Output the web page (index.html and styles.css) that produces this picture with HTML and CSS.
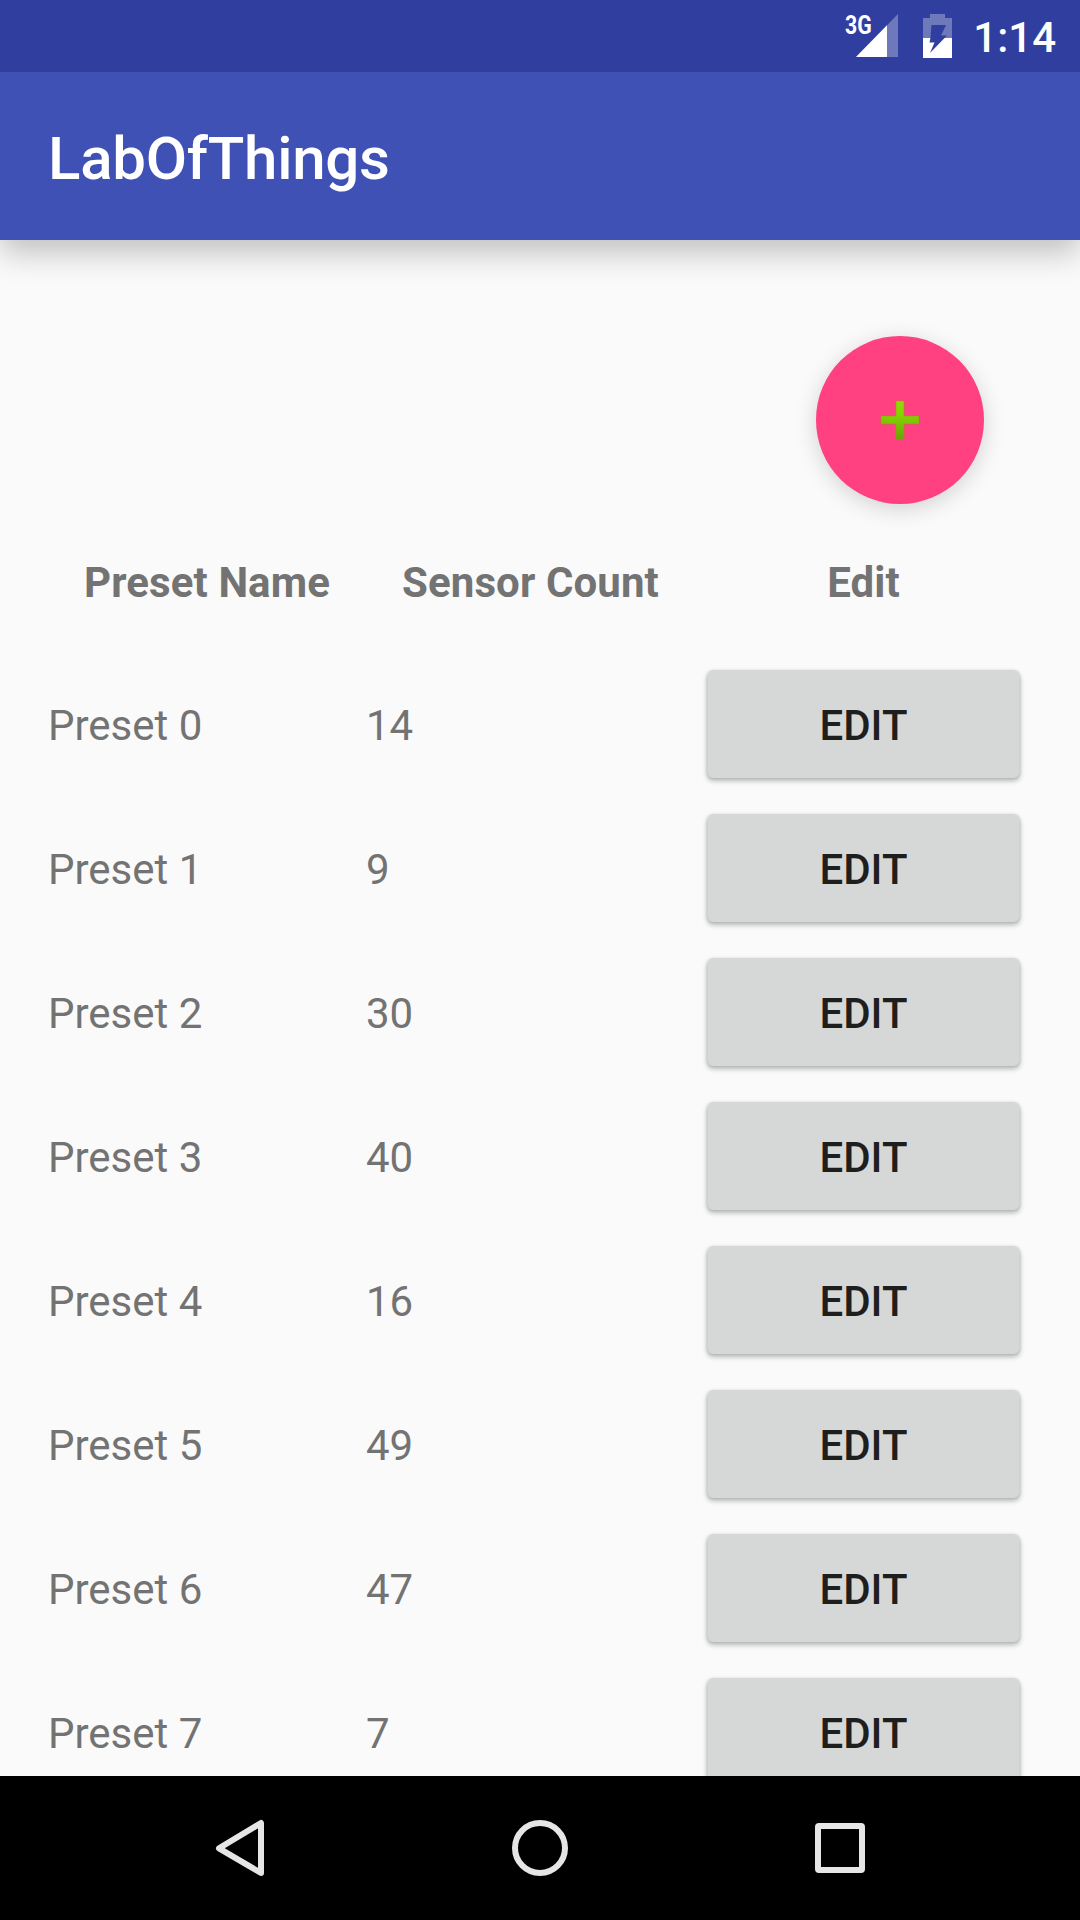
FILE: index.html
```html
<!DOCTYPE html>
<html lang="en">
<head>
<meta charset="utf-8">
<title>LabOfThings</title>
<link rel="stylesheet" href="styles.css">
</head>
<body>
<div class="screen">
  <div class="status-bar">
    <div class="network">
      <svg class="signal" width="42" height="43" viewBox="0 0 42 43">
        <path d="M42 0V43H0Z" fill="#fff" fill-opacity=".3"/>
        <path d="M31 11.300V43H0Z" fill="#fff"/>
      </svg>
      <span class="network-type">3G</span>
    </div>
    <svg class="battery" width="29" height="44" viewBox="0 0 29 44">
      <path d="M0 4H7V0H22V4H29V24H21.600L24 21.500H18L23 11H8.500L7.400 24H0Z" fill="#fff" fill-opacity=".3"/>
      <path d="M0 24H7.400L6.500 28.500H11.500L7 39L21.600 24H29V44H0Z" fill="#fff"/>
    </svg>
    <span class="clock">1:14</span>
  </div>
  <header class="app-bar"><h1 class="title">LabOfThings</h1></header>
  <main class="content">
    <div class="actions">
      <button class="fab" aria-label="Add preset">
        <svg width="40" height="40" viewBox="0 0 40 40">
          <defs>
            <linearGradient id="plus-fill" x1="0" y1="0" x2="0" y2="1">
              <stop offset="0" stop-color="#92de00"/>
              <stop offset=".4" stop-color="#86d000"/>
              <stop offset="1" stop-color="#68a400"/>
            </linearGradient>
          </defs>
          <path d="M16 1H24V16H39V24H24V39H16V24H1V16H16Z" fill="url(#plus-fill)" stroke="#8f9a20" stroke-opacity=".6" stroke-width="1" stroke-linejoin="round"/>
        </svg>
      </button>
    </div>
    <div class="table">
      <div class="row head"><span>Preset Name</span><span>Sensor Count</span><span>Edit</span></div>
      <div class="row"><span>Preset 0</span><span>14</span><button class="edit">EDIT</button></div>
      <div class="row"><span>Preset 1</span><span>9</span><button class="edit">EDIT</button></div>
      <div class="row"><span>Preset 2</span><span>30</span><button class="edit">EDIT</button></div>
      <div class="row"><span>Preset 3</span><span>40</span><button class="edit">EDIT</button></div>
      <div class="row"><span>Preset 4</span><span>16</span><button class="edit">EDIT</button></div>
      <div class="row"><span>Preset 5</span><span>49</span><button class="edit">EDIT</button></div>
      <div class="row"><span>Preset 6</span><span>47</span><button class="edit">EDIT</button></div>
      <div class="row"><span>Preset 7</span><span>7</span><button class="edit">EDIT</button></div>
    </div>
  </main>
  <nav class="nav-bar">
    <svg width="60" height="60" viewBox="0 0 60 60"><path d="M51 5V55L9 30.300Z"/></svg>
    <svg width="60" height="60" viewBox="0 0 60 60"><circle cx="30" cy="30" r="25"/></svg>
    <svg width="60" height="60" viewBox="0 0 60 60"><rect x="8" y="8" width="44" height="44" rx="1"/></svg>
  </nav>
</div>
</body>
</html>
```
FILE: styles.css
```css
* {
  box-sizing: border-box;
}

body {
  margin: 0;
  font-family: Roboto, "Liberation Sans", sans-serif;
  font-size: 42px;
  color: #737373;
}

.screen {
  display: flex;
  flex-direction: column;
  height: 1920px;
  width: 1080px;
  overflow: hidden;
  background: #fafafa;
}

.status-bar {
  position: relative;
  z-index: 1;
  display: flex;
  flex: none;
  height: 72px;
  padding: 14px 24px 0 0;
  justify-content: flex-end;
  align-items: flex-start;
  background: #303f9f;
  color: #fff;
}

.network {
  position: relative;
  height: 43px;
  margin-right: 25px;
}

.signal,
.battery {
  display: block;
}

.network-type {
  position: absolute;
  left: -11px;
  top: -2px;
  font-size: 25px;
  line-height: 28px;
  font-weight: 700;
  transform: scaleX(.85);
  transform-origin: left;
}

.clock {
  margin-left: 21px;
  line-height: 48px;
  font-weight: 500;
}

.app-bar {
  position: relative;
  flex: none;
  height: 168px;
  padding: 5px 48px 0;
  display: flex;
  align-items: center;
  background: #3f51b5;
  box-shadow: 0 12px 30px rgba(0, 0, 0, .24);
}

.title {
  margin: 0;
  color: #fff;
  font-size: 60px;
  font-weight: 500;
  letter-spacing: -.25px;
}

.content {
  flex: 1;
  min-height: 0;
  overflow: hidden;
  padding: 96px 48px 0;
}

.actions {
  display: flex;
  justify-content: flex-end;
  padding-right: 48px;
}

.fab {
  display: flex;
  align-items: center;
  justify-content: center;
  width: 168px;
  height: 168px;
  padding: 0;
  border: 0;
  border-radius: 50%;
  background: #ff4081;
  box-shadow: 0 5px 22px rgba(0, 0, 0, .16);
}

.table {
  padding-top: 49px;
}

.row {
  display: grid;
  grid-template-columns: 318px 329px 337px;
  align-items: center;
  height: 144px;
  line-height: 50px;
}

.row > span {
  padding-top: 3px;
}

.head {
  height: 99px;
  align-items: start;
  text-align: center;
  font-weight: 700;
  letter-spacing: .1px;
}

.head > span {
  padding-top: 5px;
}

.edit {
  height: 108px;
  margin: 0 13px 0 12px;
  padding: 3px 0 0;
  border: 0;
  border-radius: 6px;
  background: #d6d8d7;
  box-shadow: 0 3px 5px rgba(0, 0, 0, .27), 0 0 3px rgba(0, 0, 0, .1);
  color: #1e1e1e;
  font: 500 42px/50px Roboto, "Liberation Sans", sans-serif;
  transform: translateX(.5px);
}

.nav-bar {
  display: grid;
  flex: none;
  grid-template-columns: repeat(3, 300px);
  place-content: center;
  place-items: center;
  height: 144px;
  background: #000;
  fill: none;
  stroke: #e6e6e6;
  stroke-width: 6px;
  stroke-linejoin: round;
}
```
